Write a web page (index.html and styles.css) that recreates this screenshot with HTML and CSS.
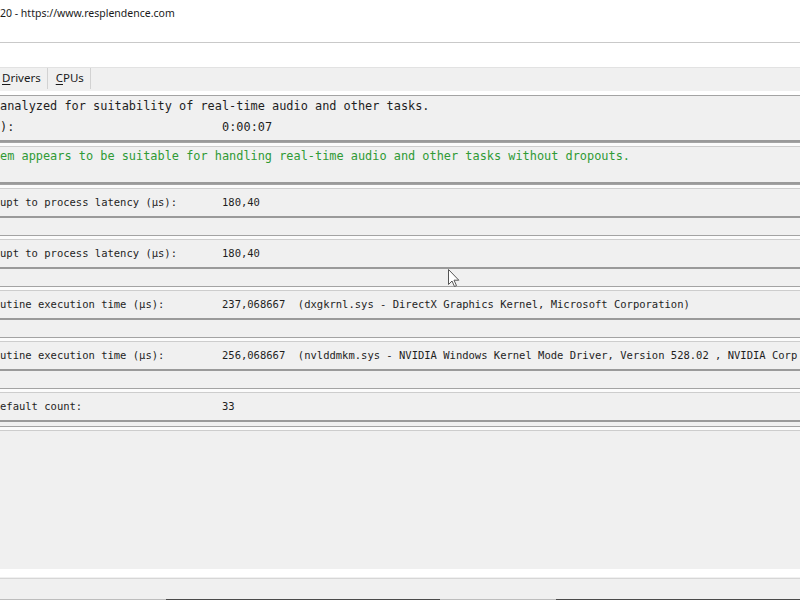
FILE: index.html
```html
<!DOCTYPE html>
<html>
<head>
<meta charset="utf-8">
<link rel="stylesheet" href="styles.css">
</head>
<body>
<div class="titlebar"><span class="title">20 - https://www.resplendence.com</span></div>
<div class="menubar"></div>
<div class="tabs">
  <span class="tab"><u>D</u>rivers</span>
  <span class="tab"><u>C</u>PUs</span>
</div>
<div class="sep-white"></div>
<div class="content">
  <div class="box box-a">
    <div class="row big">analyzed for suitability of real-time audio and other tasks.</div>
    <div class="row big"><span class="label">):</span><span>0:00:07</span></div>
  </div>
  <div class="box box-b etched">
    <div class="row green">em appears to be suitable for handling real-time audio and other tasks without dropouts.</div>
  </div>
  <div class="box etched item">
    <div class="row small"><span class="label">upt to process latency (µs):</span><span>180,40</span></div>
  </div>
  <div class="box etched item">
    <div class="row small"><span class="label">upt to process latency (µs):</span><span>180,40</span></div>
  </div>
  <div class="box etched item">
    <div class="row small"><span class="label">utine execution time (µs):</span><span>237,068667  (dxgkrnl.sys - DirectX Graphics Kernel, Microsoft Corporation)</span></div>
  </div>
  <div class="box etched item">
    <div class="row small"><span class="label">utine execution time (µs):</span><span>256,068667  (nvlddmkm.sys - NVIDIA Windows Kernel Mode Driver, Version 528.02 , NVIDIA Corp</span></div>
  </div>
  <div class="box etched item">
    <div class="row small"><span class="label">efault count:</span><span>33</span></div>
  </div>
  <div class="box etched tail"></div>
</div>
<div class="footer">
  <div class="footer-line"></div>
  <div class="taskbar-edge">
    <span class="seg seg1"></span>
    <span class="seg seg2"></span>
  </div>
</div>
<svg class="cursor" width="12" height="19" viewBox="0 0 12 19">
  <path d="M0.5 0.5 L0.5 15.5 L4 12 L6.5 17.5 L8.5 16.6 L6 11.2 L10.8 11.2 Z" fill="#fff" stroke="#555" stroke-width="1"/>
</svg>
</body>
</html>
```
FILE: styles.css
```css
html, body {
  margin: 0;
  padding: 0;
  width: 800px;
  height: 600px;
  overflow: hidden;
  background: #f0f0f0;
  position: relative;
}

.titlebar {
  height: 42px;
  background: #ffffff;
  border-bottom: 1px solid #c9c9c9;
}

.title {
  display: block;
  font-family: "Noto Sans", "Liberation Sans", sans-serif;
  font-size: 10.5px;
  line-height: 26px;
  color: #1a1a1a;
  white-space: nowrap;
}

.menubar {
  height: 24px;
  background: #ffffff;
}

.tabs {
  height: 24px;
  display: flex;
  align-items: flex-start;
  background: #f0f0f0;
  border-top: 1px solid #e2e2e2;
  box-sizing: border-box;
}

.tab {
  font-family: "Noto Sans", "Liberation Sans", sans-serif;
  font-size: 11.5px;
  line-height: 19px;
  height: 21px;
  color: #1a1a1a;
  padding: 0 6px 0 8px;
  border-right: 1px solid #d2d2d2;
}

.tab:first-child {
  padding-left: 2px;
}

.tab u {
  text-decoration-thickness: 1px;
  text-underline-offset: 2px;
}

.sep-white {
  height: 4px;
  background: #ffffff;
}

.content {
  height: 474px;
  overflow: hidden;
  font-family: "DejaVu Sans Mono", "Liberation Mono", monospace;
  color: #1e1e1e;
}

.box {
  border-top: 1px solid #a3a3a3;
  border-bottom: 2px solid #9a9a9a;
  box-sizing: border-box;
}

.etched::before {
  content: "";
  display: block;
  height: 3px;
  background: #fbfbfb;
  border-bottom: 1px solid #cdcdcd;
}

.box-a {
  padding-bottom: 2px;
}

.box-b {
  padding-bottom: 17px;
}

.item {
  height: 34px;
  margin-bottom: 17px;
}

.item:nth-last-child(2) {
  margin-bottom: 4px;
}

.tail {
  border-bottom: none;
  height: 6px;
}

.row {
  display: flex;
  white-space: nowrap;
}

.row.big {
  font-size: 11.9px;
  line-height: 21px;
}

.row.green {
  font-size: 11.9px;
  line-height: 18px;
  color: #2f9a35;
}

.row.small {
  font-size: 10.5px;
  line-height: 27px;
}

.label {
  width: 222px;
  flex: none;
  white-space: pre;
}

.row span {
  white-space: pre;
}

.footer {
  height: 31px;
  box-sizing: border-box;
  border-top: 8px solid #ffffff;
  display: flex;
  flex-direction: column;
}

.footer-line {
  height: 1px;
  margin-top: 1px;
  background: #d6d6d6;
}

.taskbar-edge {
  margin-top: auto;
  height: 1px;
  position: relative;
  background: #bdbdbd;
}

.seg {
  position: absolute;
  top: 0;
  height: 1px;
  background: #4a4a4a;
}

.seg1 {
  left: 166px;
  width: 274px;
}

.seg2 {
  left: 556px;
  width: 244px;
}

.cursor {
  position: absolute;
  left: 448px;
  top: 269px;
}
```
